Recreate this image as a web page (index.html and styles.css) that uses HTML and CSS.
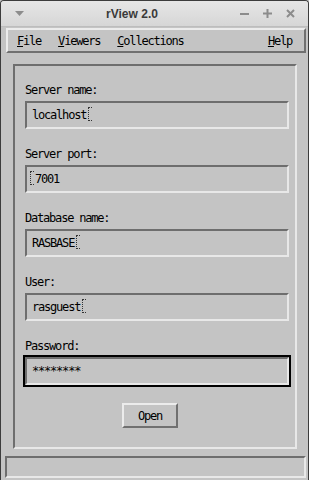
FILE: index.html
```html
<!DOCTYPE html>
<html lang="en">
<head>
    <meta charset="UTF-8">
    <meta name="viewport" content="width=device-width, initial-scale=1.0">
    <title>rView 2.0</title>
    <link rel="stylesheet" href="styles.css">
</head>
<body>
    <div class="window">
        <div class="titlebar">
            <svg class="menu-arrow" width="9" height="6" viewBox="0 0 9 6"><path d="M0 0 H9 L4.5 5 Z" fill="#8c8c8c"/></svg>
            <span class="title">rView 2.0</span>
            <div class="controls">
                <svg width="9" height="9" viewBox="0 0 9 9"><rect x="0" y="4" width="9" height="2" fill="#8c8c8c"/></svg>
                <svg width="9" height="9" viewBox="0 0 9 9"><rect x="0" y="3.5" width="9" height="2" fill="#8c8c8c"/><rect x="3.5" y="0" width="2" height="9" fill="#8c8c8c"/></svg>
                <svg width="9" height="9" viewBox="0 0 9 9"><path d="M1 1 L8 8 M8 1 L1 8" stroke="#8c8c8c" stroke-width="2"/></svg>
            </div>
        </div>

        <div class="menubar">
            <span class="menu-item"><u>F</u>ile</span>
            <span class="menu-item"><u>V</u>iewers</span>
            <span class="menu-item"><u>C</u>ollections</span>
            <span class="menu-item help"><u>H</u>elp</span>
        </div>

        <div class="panel">
            <div class="field-group">
                <label>Server name:</label>
                <div class="field">localhost<span class="ibeam"></span></div>
            </div>
            <div class="field-group">
                <label>Server port:</label>
                <div class="field"><span class="ibeam before"></span>7001</div>
            </div>
            <div class="field-group">
                <label>Database name:</label>
                <div class="field">RASBASE<span class="ibeam"></span></div>
            </div>
            <div class="field-group">
                <label>User:</label>
                <div class="field">rasguest<span class="ibeam"></span></div>
            </div>
            <div class="field-group">
                <label>Password:</label>
                <div class="field focused">********</div>
            </div>
            <div class="actions">
                <button class="btn">Open</button>
            </div>
        </div>

        <div class="statusbar"></div>
    </div>
</body>
</html>
```

FILE: styles.css
```css
body {
    margin: 0;
    background-color: #c4c4c4;
    font-family: 'DejaVu Sans Mono', 'Liberation Mono', monospace;
    font-size: 12px;
    letter-spacing: -1.2px;
    color: #000;
}

.window {
    width: 309px;
    height: 480px;
    box-sizing: border-box;
    border: 1px solid #3c3c3c;
    border-bottom: none;
    border-radius: 4px 4px 0 0;
    background-color: #c4c4c4;
    display: flex;
    flex-direction: column;
    overflow: hidden;
}

.titlebar {
    height: 25px;
    flex-shrink: 0;
    display: flex;
    align-items: center;
    background: linear-gradient(#e6e6e6, #d6d6d6);
    border-bottom: 1px solid #bdbdbd;
    padding: 0 13px 0 14px;
}

.menu-arrow {
    margin-top: 1px;
}

.title {
    flex: 1;
    text-align: center;
    font-family: 'Liberation Sans', Arial, sans-serif;
    font-weight: bold;
    font-size: 12px;
    letter-spacing: 0;
    color: #3a3a3a;
}

.controls {
    display: flex;
    gap: 14px;
}

.menubar {
    display: flex;
    align-items: center;
    height: 21px;
    margin: 1px 2px 0 5px;
    padding-left: 9px;
    border: 2px solid;
    border-color: #ececec #707070 #707070 #ececec;
}

.menu-item {
    margin-right: 17px;
}

.menu-item.help {
    margin-left: auto;
    margin-right: 12px;
}

.panel {
    margin: 11px 11px 0 12px;
    padding: 17px 6px 19px 10px;
    border: 2px solid;
    border-color: #6e6e6e #e8e8e8 #e8e8e8 #6e6e6e;
}

.field-group {
    display: flex;
    flex-direction: column;
    margin-bottom: 18px;
}

.field-group label {
    height: 14px;
    line-height: 14px;
    margin-bottom: 4px;
}

.field {
    height: 24px;
    line-height: 24px;
    padding-left: 5px;
    border: 2px solid;
    border-color: #6e6e6e #e8e8e8 #e8e8e8 #6e6e6e;
    display: flex;
    align-items: center;
}

.field.focused {
    outline: 2px solid #000;
}

.ibeam {
    display: inline-block;
    width: 3px;
    height: 12px;
    margin-left: 2px;
    margin-top: -2px;
    border-left: 1px dotted #333;
    border-top: 1px dotted #333;
    border-bottom: 1px dotted #333;
}

.ibeam.before {
    margin-left: -2px;
    margin-right: 1px;
}

.actions {
    display: flex;
    justify-content: center;
    padding-right: 14px;
}

.btn {
    width: 56px;
    height: 25px;
    background-color: #c4c4c4;
    border: 2px solid;
    border-color: #ececec #707070 #707070 #ececec;
    font-family: 'DejaVu Sans Mono', 'Liberation Mono', monospace;
    font-size: 12px;
    letter-spacing: -1.2px;
    color: #000;
    padding: 0;
}

.statusbar {
    height: 18px;
    margin: 7px 2px 2px 4px;
    border: 2px solid;
    border-color: #6e6e6e #e8e8e8 #e8e8e8 #6e6e6e;
}
```
